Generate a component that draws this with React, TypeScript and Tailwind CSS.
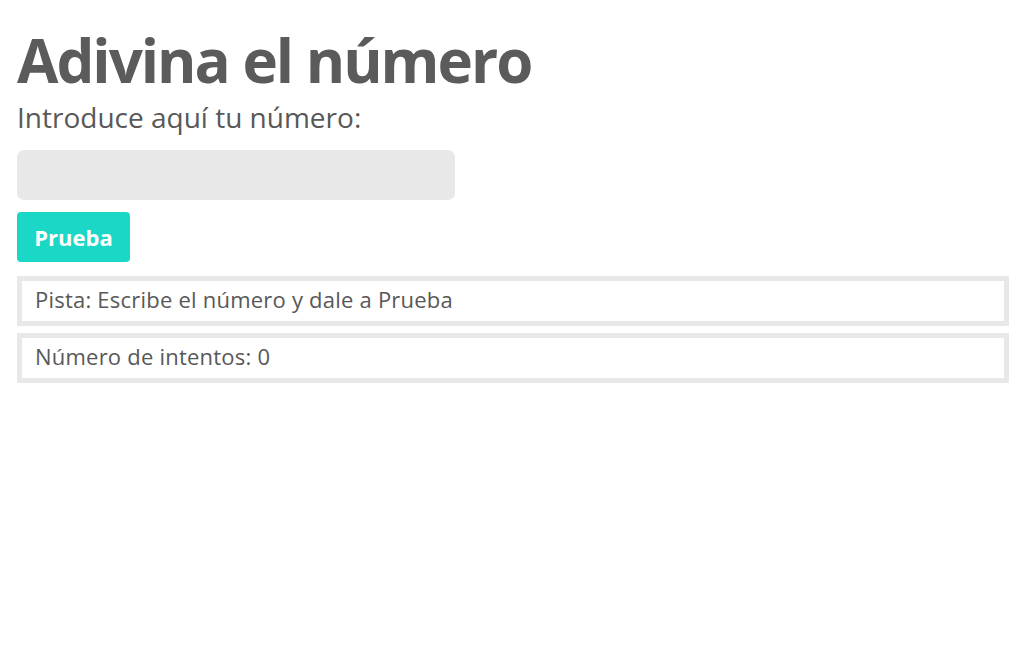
export default function App() {
  return (
    <div className="min-h-screen bg-white pl-[17px] pr-[18px] pt-[24px] font-['Open_Sans',sans-serif] text-[#585858]">
      <h1 className="text-[60px] leading-[72px] font-bold tracking-[-2px] text-[#5b5b5b]">Adivina el número</h1>
      <p className="mt-[3px] text-[28px] leading-[36px]">Introduce aquí tu número:</p>
      <input
        type="text"
        className="mt-[15px] block h-[50px] w-[438px] rounded-[7px] bg-[#e8e8e8] px-3 outline-none"
      />
      <button className="mt-[12px] block h-[50px] w-[113px] rounded-[4px] bg-[#1bd7c6] text-[22px] font-bold text-white">
        Prueba
      </button>
      <div className="mt-[14px] border-[5px] border-[#e8e8e8] px-[13px] pb-[4px] text-[22px] leading-[36px] tracking-[0.22px]">
        Pista: Escribe el número y dale a Prueba
      </div>
      <div className="mt-[7px] border-[5px] border-[#e8e8e8] px-[13px] pb-[4px] text-[22px] leading-[36px] tracking-[0.22px]">
        Número de intentos: 0
      </div>
    </div>
  );
}
